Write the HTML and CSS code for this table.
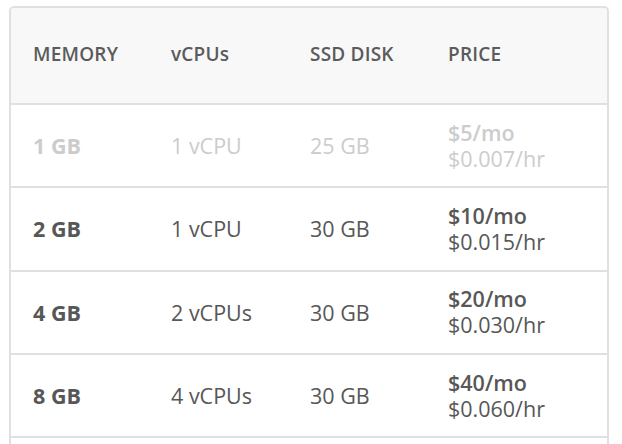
FILE: index.html
```html
<!DOCTYPE html>
<html>
<head>
<meta charset="utf-8">
<link rel="stylesheet" href="styles.css">
</head>
<body>
<div class="card">
  <div class="row head">
    <div class="cell">MEMORY</div>
    <div class="cell">vCPUs</div>
    <div class="cell">SSD DISK</div>
    <div class="cell">PRICE</div>
  </div>
  <div class="row off">
    <div class="cell mem">1 GB</div>
    <div class="cell">1 vCPU</div>
    <div class="cell">25 GB</div>
    <div class="cell price"><span class="mo">$5/mo</span><span>$0.007/hr</span></div>
  </div>
  <div class="row">
    <div class="cell mem">2 GB</div>
    <div class="cell">1 vCPU</div>
    <div class="cell">30 GB</div>
    <div class="cell price"><span class="mo">$10/mo</span><span>$0.015/hr</span></div>
  </div>
  <div class="row">
    <div class="cell mem">4 GB</div>
    <div class="cell">2 vCPUs</div>
    <div class="cell">30 GB</div>
    <div class="cell price"><span class="mo">$20/mo</span><span>$0.030/hr</span></div>
  </div>
  <div class="row">
    <div class="cell mem">8 GB</div>
    <div class="cell">4 vCPUs</div>
    <div class="cell">30 GB</div>
    <div class="cell price"><span class="mo">$40/mo</span><span>$0.060/hr</span></div>
  </div>
  <div class="row empty"></div>
</div>
</body>
</html>
```
FILE: styles.css
```css
html, body {
  margin: 0;
  padding: 0;
  background: #fff;
}
body {
  font-family: "Open Sans", "Liberation Sans", sans-serif;
  color: #575757;
}
.card {
  margin: 6px 0 0 9px;
  width: 596px;
  border: 2px solid #e0e0e0;
  border-radius: 5px;
  overflow: hidden;
}
.row {
  display: grid;
  grid-template-columns: 138px 139px 138px 1fr;
  align-items: center;
  height: 81.3px;
  border-top: 2px solid #e0e0e0;
}
.row.head {
  border-top: none;
  height: 92px;
  padding-bottom: 3px;
  background: #f8f8f8;
  font-size: 19px;
  font-weight: 600;
  color: #5b5b5b;
  letter-spacing: 0.2px;
}
.cell {
  padding-left: 22px;
}
.row:not(.head) .cell {
  font-size: 21.5px;
}
.cell.mem {
  font-weight: 700;
}
.price {
  display: flex;
  flex-direction: column;
  line-height: 26px;
}
.price .mo {
  font-weight: 600;
}
.row.off {
  color: #cccccc;
}
```
